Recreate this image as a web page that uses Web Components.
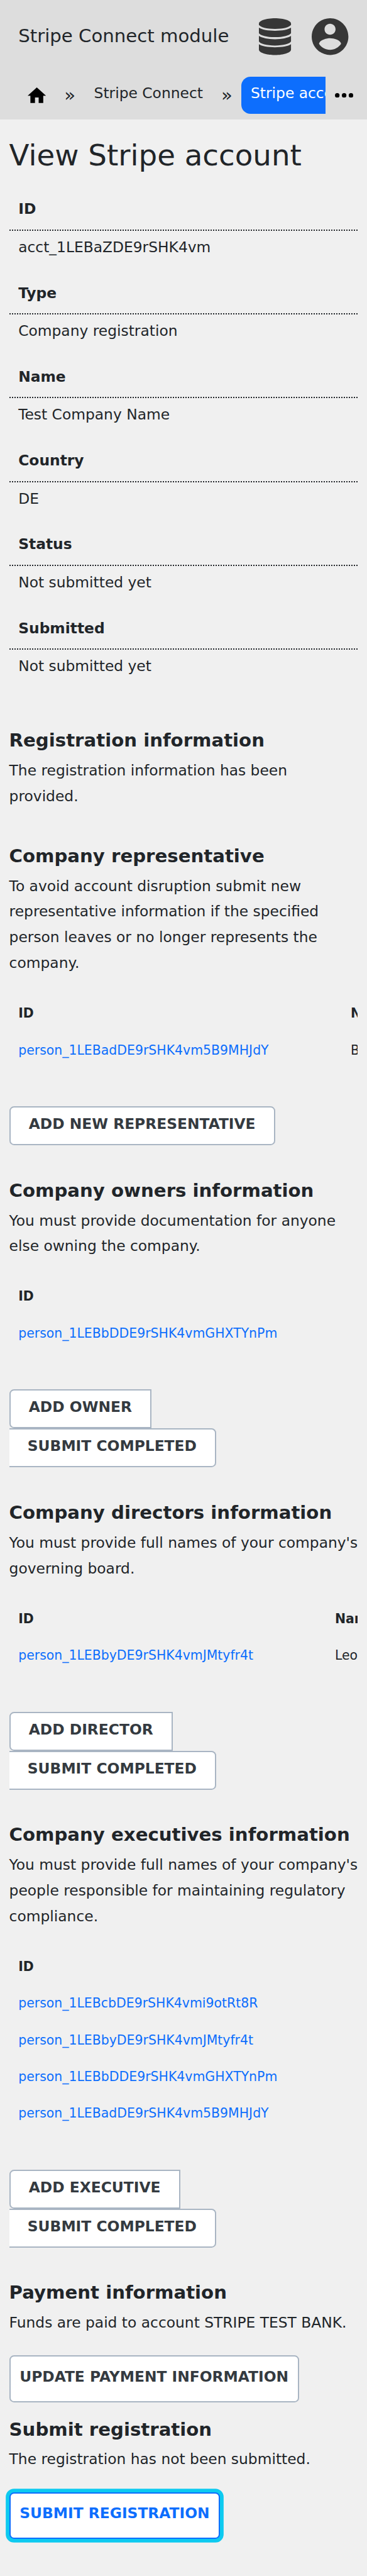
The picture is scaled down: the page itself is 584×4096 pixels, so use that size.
<!DOCTYPE html>
<html lang="en">
<head>
<meta charset="utf-8">
<title>View Stripe account</title>
<style>
html { background: #f0f0f0; overflow: hidden; }
body { margin: 0; zoom: 1.825; font: 12.8px/22.4px "DejaVu Sans", sans-serif; color: #212529; }
</style>
</head>
<body>
<account-page></account-page>
<script>
const define = (name, html) => customElements.define(name, class extends HTMLElement {
  constructor() {
    super();
    this.attachShadow({ mode: 'open' }).innerHTML = html;
  }
});

define('icon-database', `
<style>:host { display: block; width: 28px; height: 32px; } svg { display: block; width: 100%; height: 100%; }</style>
<svg viewBox="0 0 28 32" fill="#373737">
  <path d="M0 4.6C0 2.100 6.300 0 14 0s14 2.100 14 4.600v1.200C26.800 7.900 21.200 9.300 14 9.300S1.200 7.900 0 5.800z"/>
  <path d="M0 8.200C2.500 9.900 8 10.900 14 10.900S25.500 9.900 28 8.200v4.800C27 15 21.200 16.500 14 16.500S1 15 0 13z"/>
  <path d="M0 15.400C2.500 17.200 8 18.300 14 18.300S25.500 17.200 28 15.400v4.800C27 22.300 21.200 23.800 14 23.800S1 22.300 0 20.200z"/>
  <path d="M0 22.600C2.500 24.400 8 25.300 14 25.300S25.500 24.400 28 22.600v4.600C28 29.900 21.700 32 14 32S0 29.900 0 27.200z"/>
</svg>`);

define('icon-account', `
<style>:host { display: block; width: 32px; height: 32px; } svg { display: block; width: 100%; height: 100%; }</style>
<svg viewBox="2 2 20 20" fill="#373737"><path d="M12 2C6.480 2 2 6.480 2 12s4.480 10 10 10 10-4.480 10-10S17.520 2 12 2zm0 3c1.660 0 3 1.340 3 3s-1.340 3-3 3-3-1.340-3-3 1.340-3 3-3zm0 14.200c-2.500 0-4.710-1.280-6-3.220.03-1.990 4-3.080 6-3.080 1.990 0 5.970 1.090 6 3.080-1.290 1.940-3.500 3.220-6 3.220z"/></svg>`);

define('icon-home', `
<style>:host { display: block; width: 16px; height: 13.6px; } svg { display: block; width: 100%; height: 100%; }</style>
<svg viewBox="2 3 20 17"><path d="M10 20v-6h4v6h5v-8h3L12 3 2 12h3v8z"/></svg>`);

define('icon-more', `
<style>:host { display: block; width: 16px; height: 4px; } svg { display: block; width: 100%; height: 100%; }</style>
<svg viewBox="4 10 16 4"><circle cx="6" cy="12" r="2"/><circle cx="12" cy="12" r="2"/><circle cx="18" cy="12" r="2"/></svg>`);

define('app-header', `
<style>
:host { display: block; box-sizing: border-box; height: 104px; background: #ddd; }
.bar { display: flex; align-items: center; height: 64px; padding: 0 16px; }
.title { flex: 1; font-size: 16px; padding-bottom: .6px; }
icon-account { margin-left: 18px; }
nav { display: flex; align-items: center; height: 32px; padding: 3px 12px 0 8px; }
.crumbs { display: flex; align-items: center; width: 276px; height: 32px; overflow: hidden; white-space: nowrap; }
icon-home { margin: 0 16px; flex: none; }
.sep { width: 10px; font-size: 16px; flex: none; }
.crumb { box-sizing: border-box; height: 32px; padding: 3.400px 8px 0; flex: none; }
.crumb.link { margin: 0 8px; }
.crumb.active { background: #0d6efd; color: #fff; border-radius: 8px; margin-left: 7.700px; }
icon-more { margin-left: 8px; flex: none; }
</style>
<div class="bar"><div class="title">Stripe Connect module</div><icon-database></icon-database><icon-account></icon-account></div>
<nav><div class="crumbs"><icon-home></icon-home><span class="sep">»</span><span class="crumb link">Stripe Connect</span><span class="sep">»</span><span class="crumb active">Stripe account</span></div><icon-more></icon-more></nav>`);

define('detail-item', `
<style>
:host { display: block; height: 73px; }
.label { font-weight: bold; padding: 0 8px 6.400px; border-bottom: 1.120px dotted #212529; }
.value { padding: 3.300px 8px 0; }
</style>
<div class="label"><slot name="label"></slot></div>
<div class="value"><slot></slot></div>`);

define('info-section', `
<style>
:host { display: block; margin-top: var(--gap, 29.900px); }
h2 { margin: 0 0 5.300px; font-size: 16px; line-height: 19.200px; white-space: nowrap; }
p { margin: 0; }
</style>
<h2><slot name="heading"></slot></h2>
<p><slot name="text"></slot></p>
<slot></slot>`);

define('person-table', `
<style>
:host { display: grid; grid-template-columns: var(--col, 400px) max-content; grid-auto-rows: 32px; align-items: center; margin: 16.600px 0 32.900px; padding-left: 8px; overflow: hidden; font-size: 11.200px; line-height: 20px; }
::slotted(b) { font-weight: bold; }
::slotted(a) { color: #0d6efd; grid-column: 1; }
</style><slot></slot>`);

define('action-button', `
<style>
:host { display: block; box-sizing: border-box; width: max-content; height: 34px; padding: 3.300px 16px 0; border: 1.120px solid #a9b5c3; border-radius: 4px; background: #fff; color: #343a40; font-weight: bold; white-space: nowrap; }
:host([join="start"]) { border-radius: 4px 0 0 4px; }
:host([join="end"]) { border-radius: 0 4px 4px 0; border-left: 0; }
:host([large]) { height: 41px; margin-top: 17.200px; padding: 6.300px 8px 0; }
:host([focused]) { color: #0d6efd; border-color: #0d6efd; box-shadow: 0 0 0 3.200px #0dcaf0; }
</style><slot></slot>`);

define('account-page', `
<style>
:host { display: block; height: 2244px; }
main { padding: 15.800px 8px 0; }
h1 { margin: 0 0 20.700px; font-size: 25.600px; font-weight: normal; line-height: 30.700px; white-space: nowrap; }
</style>
<app-header></app-header>
<main>
<h1>View Stripe account</h1>
<detail-item><span slot="label">ID</span>acct_1LEBaZDE9rSHK4vm</detail-item>
<detail-item><span slot="label">Type</span>Company registration</detail-item>
<detail-item><span slot="label">Name</span>Test Company Name</detail-item>
<detail-item><span slot="label">Country</span>DE</detail-item>
<detail-item><span slot="label">Status</span>Not submitted yet</detail-item>
<detail-item><span slot="label">Submitted</span>Not submitted yet</detail-item>
<info-section style="--gap:26.400px"><span slot="heading">Registration information</span><span slot="text">The registration information has been provided.</span></info-section>
<info-section style="--gap:31.500px"><span slot="heading">Company representative</span><span slot="text">To avoid account disruption submit new representative information if the specified person leaves or no longer represents the company.</span>
<person-table style="--col:289.700px"><b>ID</b><b>Name</b><a>person_1LEBadDE9rSHK4vm5B9MHJdY</a><span>B</span></person-table>
<action-button>ADD NEW REPRESENTATIVE</action-button></info-section>
<info-section><span slot="heading">Company owners information</span><span slot="text">You must provide documentation for anyone else owning the company.</span>
<person-table><b>ID</b><a>person_1LEBbDDE9rSHK4vmGHXTYnPm</a></person-table>
<action-button join="start">ADD OWNER</action-button><action-button join="end">SUBMIT COMPLETED</action-button></info-section>
<info-section><span slot="heading">Company directors information</span><span slot="text">You must provide full names of your company's governing board.</span>
<person-table style="--col:276px"><b>ID</b><b>Name</b><a>person_1LEBbyDE9rSHK4vmJMtyfr4t</a><span>Leo</span></person-table>
<action-button join="start">ADD DIRECTOR</action-button><action-button join="end">SUBMIT COMPLETED</action-button></info-section>
<info-section><span slot="heading">Company executives information</span><span slot="text">You must provide full names of your company's people responsible for maintaining regulatory compliance.</span>
<person-table><b>ID</b><a>person_1LEBcbDE9rSHK4vmi9otRt8R</a><a>person_1LEBbyDE9rSHK4vmJMtyfr4t</a><a>person_1LEBbDDE9rSHK4vmGHXTYnPm</a><a>person_1LEBadDE9rSHK4vm5B9MHJdY</a></person-table>
<action-button join="start">ADD EXECUTIVE</action-button><action-button join="end">SUBMIT COMPLETED</action-button></info-section>
<info-section><span slot="heading">Payment information</span><span slot="text">Funds are paid to account STRIPE TEST BANK.</span>
<action-button large>UPDATE PAYMENT INFORMATION</action-button></info-section>
<info-section style="--gap:13.900px"><span slot="heading">Submit registration</span><span slot="text">The registration has not been submitted.</span>
<action-button large focused>SUBMIT REGISTRATION</action-button></info-section>
</main>`);
</script>
</body>
</html>
